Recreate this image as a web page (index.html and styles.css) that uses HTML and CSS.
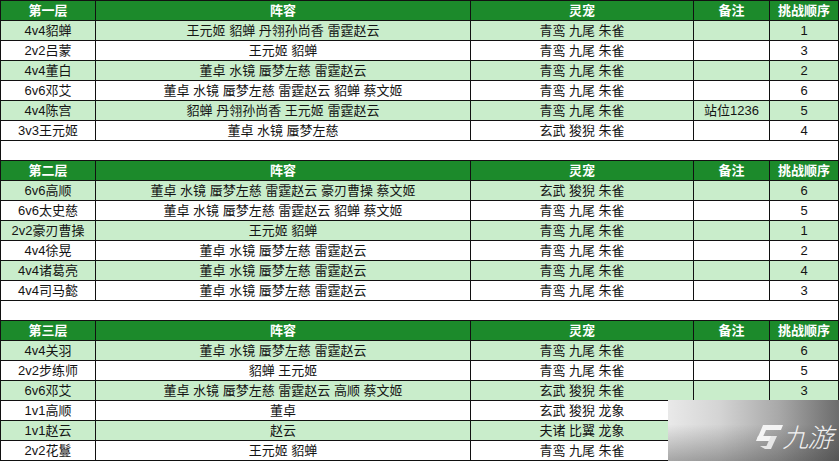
FILE: index.html
```html
<!DOCTYPE html>
<html lang="zh">
<head>
<meta charset="utf-8">
<link rel="stylesheet" href="styles.css">
</head>
<body>
<div class="page">
<table class="grid">
  <colgroup>
    <col class="c1"><col class="c2"><col class="c3"><col class="c4"><col class="c5">
  </colgroup>
  <tbody>
    <tr class="head"><td>第一层</td><td>阵容</td><td>灵宠</td><td>备注</td><td>挑战顺序</td></tr>
    <tr class="alt"><td>4v4貂蝉</td><td>王元姬 貂蝉 丹翎孙尚香 雷霆赵云</td><td>青鸾 九尾 朱雀</td><td></td><td>1</td></tr>
    <tr><td>2v2吕蒙</td><td>王元姬 貂蝉</td><td>青鸾 九尾 朱雀</td><td></td><td>3</td></tr>
    <tr class="alt"><td>4v4董白</td><td>董卓 水镜 蜃梦左慈 雷霆赵云</td><td>青鸾 九尾 朱雀</td><td></td><td>2</td></tr>
    <tr><td>6v6邓艾</td><td>董卓 水镜 蜃梦左慈 雷霆赵云 貂蝉 蔡文姬</td><td>青鸾 九尾 朱雀</td><td></td><td>6</td></tr>
    <tr class="alt"><td>4v4陈宫</td><td>貂蝉 丹翎孙尚香 王元姬 雷霆赵云</td><td>青鸾 九尾 朱雀</td><td>站位1236</td><td>5</td></tr>
    <tr><td>3v3王元姬</td><td>董卓 水镜 蜃梦左慈</td><td>玄武 狻猊 朱雀</td><td></td><td>4</td></tr>
    <tr class="gap"><td colspan="5"></td></tr>

    <tr class="head"><td>第二层</td><td>阵容</td><td>灵宠</td><td>备注</td><td>挑战顺序</td></tr>
    <tr class="alt"><td>6v6高顺</td><td>董卓 水镜 蜃梦左慈 雷霆赵云 豪刃曹操 蔡文姬</td><td>玄武 狻猊 朱雀</td><td></td><td>6</td></tr>
    <tr><td>6v6太史慈</td><td>董卓 水镜 蜃梦左慈 雷霆赵云 貂蝉 蔡文姬</td><td>青鸾 九尾 朱雀</td><td></td><td>5</td></tr>
    <tr class="alt"><td>2v2豪刃曹操</td><td>王元姬 貂蝉</td><td>青鸾 九尾 朱雀</td><td></td><td>1</td></tr>
    <tr><td>4v4徐晃</td><td>董卓 水镜 蜃梦左慈 雷霆赵云</td><td>青鸾 九尾 朱雀</td><td></td><td>2</td></tr>
    <tr class="alt"><td>4v4诸葛亮</td><td>董卓 水镜 蜃梦左慈 雷霆赵云</td><td>青鸾 九尾 朱雀</td><td></td><td>4</td></tr>
    <tr><td>4v4司马懿</td><td>董卓 水镜 蜃梦左慈 雷霆赵云</td><td>青鸾 九尾 朱雀</td><td></td><td>3</td></tr>
    <tr class="gap"><td colspan="5"></td></tr>

    <tr class="head"><td>第三层</td><td>阵容</td><td>灵宠</td><td>备注</td><td>挑战顺序</td></tr>
    <tr class="alt"><td>4v4关羽</td><td>董卓 水镜 蜃梦左慈 雷霆赵云</td><td>青鸾 九尾 朱雀</td><td></td><td>6</td></tr>
    <tr><td>2v2步练师</td><td>貂蝉 王元姬</td><td>青鸾 九尾 朱雀</td><td></td><td>5</td></tr>
    <tr class="alt"><td>6v6邓艾</td><td>董卓 水镜 蜃梦左慈 雷霆赵云 高顺 蔡文姬</td><td>玄武 狻猊 朱雀</td><td></td><td>3</td></tr>
    <tr><td>1v1高顺</td><td>董卓</td><td>玄武 狻猊 龙象</td><td></td><td></td></tr>
    <tr class="alt"><td>1v1赵云</td><td>赵云</td><td>夫诸 比翼 龙象</td><td></td><td></td></tr>
    <tr><td>2v2花鬘</td><td>王元姬 貂蝉</td><td>青鸾 九尾 朱雀</td><td></td><td></td></tr>
  </tbody>
</table>

<div class="mark">
  <svg class="mark-logo" width="30" height="26" viewBox="0 0 30 26">
    <polygon points="9,1 29,1 27,6 7,6" fill="#f4f4f4"/>
    <polygon points="7,6 12,6 8,15 3,15" fill="#f4f4f4"/>
    <polygon points="4,12 22,12 20,17 2,17" fill="#f4f4f4"/>
    <polygon points="17,12 23,12 17,25 11,25" fill="#e6e6e6"/>
    <polygon points="11,25 17,25 15,22 6,22" fill="#e6e6e6"/>
  </svg>
  <span class="mark-text">九游</span>
</div>
</div>
</body>
</html>
```

FILE: styles.css
```css
html, body {
  margin: 0;
  padding: 0;
  background: #ffffff;
}

.page {
  position: relative;
  width: 839px;
  height: 461px;
  overflow: hidden;
}

.grid {
  border-collapse: collapse;
  table-layout: fixed;
  width: 838px;
  font-family: "Liberation Sans", "Noto Sans CJK SC", sans-serif;
  font-size: 13px;
  color: #141414;
}

.c1 { width: 95px; }
.c2 { width: 375px; }
.c3 { width: 223px; }
.c4 { width: 76px; }
.c5 { width: 69px; }

.grid tr {
  height: 20px;
}

.grid td {
  border: 1px solid #111111;
  padding: 0;
  height: 19px;
  line-height: 18px;
  text-align: center;
  white-space: nowrap;
  overflow: hidden;
}

.grid tr.head td {
  background: #1c8a2b;
  color: #ffffff;
  font-weight: bold;
}

.grid tr.alt td {
  background: #c9edcb;
}

.grid tr.gap td {
  background: #ffffff;
}

.mark {
  position: absolute;
  left: 668px;
  top: 400px;
  width: 171px;
  height: 61px;
  background:
    linear-gradient(180deg, rgba(255,255,255,0) 40%, rgba(40,40,40,0.35) 100%),
    linear-gradient(90deg, #e9e9e9 0%, #d4d4d4 30%, #a8a8a8 65%, #6c6c6c 100%);
  display: flex;
  align-items: center;
  justify-content: flex-end;
  gap: 1px;
  padding-right: 4px;
  box-sizing: border-box;
}

.mark-logo {
  display: block;
  width: 30px;
  height: 26px;
  margin-top: 12px;
}

.mark-text {
  font-family: "Noto Sans CJK SC", sans-serif;
  font-size: 26px;
  font-weight: 300;
  color: #f2f2f2;
  transform: skewX(-14deg);
  letter-spacing: -1px;
  margin-top: 10px;
}
```
